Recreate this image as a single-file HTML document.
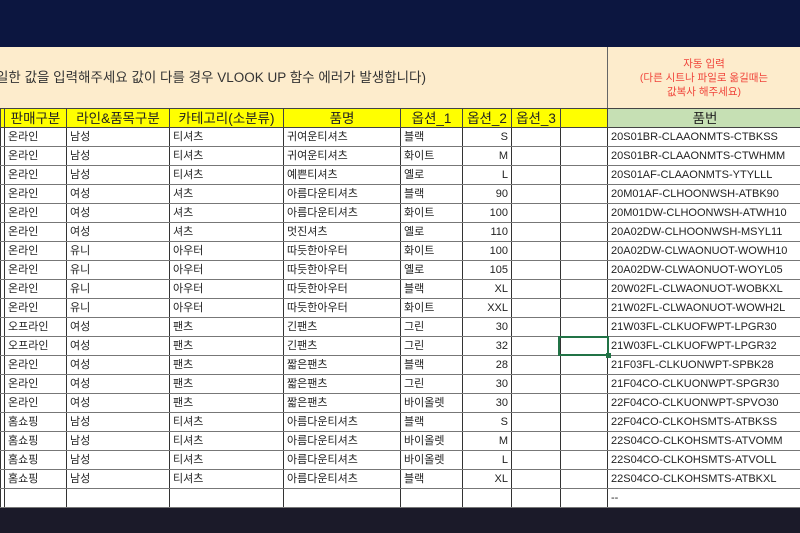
<!DOCTYPE html>
<html><head><meta charset="utf-8"><style>
*{margin:0;padding:0;box-sizing:border-box}
body{width:800px;height:533px;overflow:hidden;background:#fff;position:relative;font-family:"Liberation Sans","Noto Sans CJK KR",sans-serif}
.top{position:absolute;left:0;top:0;width:800px;height:47px;background:#0c1640}
.bot{position:absolute;left:0;top:508px;width:800px;height:25px;background:#1b1a29}
.cream{position:absolute;left:0;top:47px;width:800px;height:61px;background:#fdeccc}
.divv{position:absolute;left:607px;top:47px;width:1px;height:61px;background:#666}
.msg{position:absolute;left:-4px;top:66px;font-size:13.5px;color:#333;white-space:nowrap}
.red{position:absolute;left:608px;top:57px;width:192px;text-align:center;font-size:10.5px;line-height:14px;color:#f0443a}
table{position:absolute;left:0;top:108px;border-collapse:collapse;table-layout:fixed;width:801px}
td{height:19px;border:1px solid #777;border-left:1px solid #333;border-right:1px solid #333;font-size:11px;color:#222;padding:0 3px;white-space:nowrap;overflow:hidden;line-height:17px}
tr.h td{background:#ffff00;text-align:center;font-size:13.5px;color:#222;border-color:#444}
tr.h td.g{background:#c6e0b4}
td.r{text-align:right}
.sel{position:absolute;left:558px;top:336px;width:51px;height:20px;border:2px solid #217346}
.sel:after{content:"";position:absolute;right:-4px;bottom:-4px;width:5px;height:5px;background:#217346}
</style></head><body>
<div class="top"></div>
<div class="cream"></div>
<div class="divv"></div>
<div class="msg">일한 값을 입력해주세요 값이 다를 경우 VLOOK UP 함수 에러가 발생합니다)</div>
<div class="red">자동 입력<br>(다른 시트나 파일로 옮길때는<br>값복사 해주세요)</div>
<table>
<colgroup><col style="width:4px"><col style="width:62px"><col style="width:103px"><col style="width:114px"><col style="width:117px"><col style="width:62px"><col style="width:49px"><col style="width:49px"><col style="width:47px"><col style="width:195px"></colgroup>
<tr class="h"><td></td><td>판매구분</td><td>라인&amp;품목구분</td><td>카테고리(소분류)</td><td>품명</td><td>옵션_1</td><td>옵션_2</td><td>옵션_3</td><td></td><td class="g">품번</td></tr>
<tr><td></td><td>온라인</td><td>남성</td><td>티셔츠</td><td>귀여운티셔츠</td><td>블랙</td><td class="r">S</td><td></td><td></td><td>20S01BR-CLAAONMTS-CTBKSS</td></tr>
<tr><td></td><td>온라인</td><td>남성</td><td>티셔츠</td><td>귀여운티셔츠</td><td>화이트</td><td class="r">M</td><td></td><td></td><td>20S01BR-CLAAONMTS-CTWHMM</td></tr>
<tr><td></td><td>온라인</td><td>남성</td><td>티셔츠</td><td>예쁜티셔츠</td><td>옐로</td><td class="r">L</td><td></td><td></td><td>20S01AF-CLAAONMTS-YTYLLL</td></tr>
<tr><td></td><td>온라인</td><td>여성</td><td>셔츠</td><td>아름다운티셔츠</td><td>블랙</td><td class="r">90</td><td></td><td></td><td>20M01AF-CLHOONWSH-ATBK90</td></tr>
<tr><td></td><td>온라인</td><td>여성</td><td>셔츠</td><td>아름다운티셔츠</td><td>화이트</td><td class="r">100</td><td></td><td></td><td>20M01DW-CLHOONWSH-ATWH10</td></tr>
<tr><td></td><td>온라인</td><td>여성</td><td>셔츠</td><td>멋진셔츠</td><td>옐로</td><td class="r">110</td><td></td><td></td><td>20A02DW-CLHOONWSH-MSYL11</td></tr>
<tr><td></td><td>온라인</td><td>유니</td><td>아우터</td><td>따듯한아우터</td><td>화이트</td><td class="r">100</td><td></td><td></td><td>20A02DW-CLWAONUOT-WOWH10</td></tr>
<tr><td></td><td>온라인</td><td>유니</td><td>아우터</td><td>따듯한아우터</td><td>옐로</td><td class="r">105</td><td></td><td></td><td>20A02DW-CLWAONUOT-WOYL05</td></tr>
<tr><td></td><td>온라인</td><td>유니</td><td>아우터</td><td>따듯한아우터</td><td>블랙</td><td class="r">XL</td><td></td><td></td><td>20W02FL-CLWAONUOT-WOBKXL</td></tr>
<tr><td></td><td>온라인</td><td>유니</td><td>아우터</td><td>따듯한아우터</td><td>화이트</td><td class="r">XXL</td><td></td><td></td><td>21W02FL-CLWAONUOT-WOWH2L</td></tr>
<tr><td></td><td>오프라인</td><td>여성</td><td>팬츠</td><td>긴팬츠</td><td>그린</td><td class="r">30</td><td></td><td></td><td>21W03FL-CLKUOFWPT-LPGR30</td></tr>
<tr><td></td><td>오프라인</td><td>여성</td><td>팬츠</td><td>긴팬츠</td><td>그린</td><td class="r">32</td><td></td><td></td><td>21W03FL-CLKUOFWPT-LPGR32</td></tr>
<tr><td></td><td>온라인</td><td>여성</td><td>팬츠</td><td>짧은팬츠</td><td>블랙</td><td class="r">28</td><td></td><td></td><td>21F03FL-CLKUONWPT-SPBK28</td></tr>
<tr><td></td><td>온라인</td><td>여성</td><td>팬츠</td><td>짧은팬츠</td><td>그린</td><td class="r">30</td><td></td><td></td><td>21F04CO-CLKUONWPT-SPGR30</td></tr>
<tr><td></td><td>온라인</td><td>여성</td><td>팬츠</td><td>짧은팬츠</td><td>바이올렛</td><td class="r">30</td><td></td><td></td><td>22F04CO-CLKUONWPT-SPVO30</td></tr>
<tr><td></td><td>홈쇼핑</td><td>남성</td><td>티셔츠</td><td>아름다운티셔츠</td><td>블랙</td><td class="r">S</td><td></td><td></td><td>22F04CO-CLKOHSMTS-ATBKSS</td></tr>
<tr><td></td><td>홈쇼핑</td><td>남성</td><td>티셔츠</td><td>아름다운티셔츠</td><td>바이올렛</td><td class="r">M</td><td></td><td></td><td>22S04CO-CLKOHSMTS-ATVOMM</td></tr>
<tr><td></td><td>홈쇼핑</td><td>남성</td><td>티셔츠</td><td>아름다운티셔츠</td><td>바이올렛</td><td class="r">L</td><td></td><td></td><td>22S04CO-CLKOHSMTS-ATVOLL</td></tr>
<tr><td></td><td>홈쇼핑</td><td>남성</td><td>티셔츠</td><td>아름다운티셔츠</td><td>블랙</td><td class="r">XL</td><td></td><td></td><td>22S04CO-CLKOHSMTS-ATBKXL</td></tr>
<tr><td></td><td></td><td></td><td></td><td></td><td></td><td></td><td></td><td></td><td>--</td></tr>
</table>
<div class="sel"></div>
<div class="bot"></div>
</body></html>
